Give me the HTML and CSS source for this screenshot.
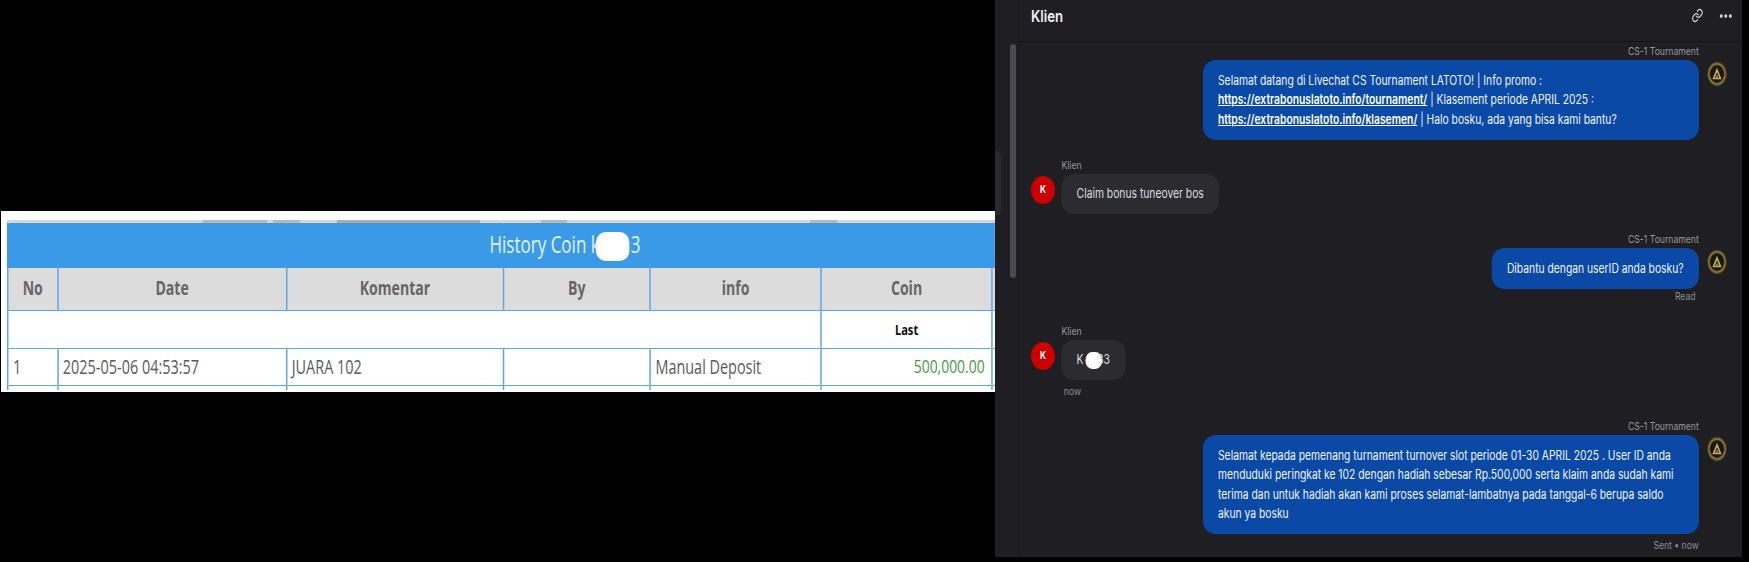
FILE: index.html
```html
<!DOCTYPE html>
<html lang="id">
<head>
<meta charset="utf-8">
<title>History Coin and Livechat</title>
<link rel="stylesheet" href="styles.css">
</head>
<body>
<main class="page">
  <section class="sheet">
    <div class="viewport">
      <div class="cut-row"></div>
      <div class="squish">
        <table class="coin-table">
          <colgroup>
            <col class="c-no"><col class="c-date"><col class="c-kom"><col class="c-by"><col class="c-info"><col class="c-coin"><col class="c-rest">
          </colgroup>
          <thead>
            <tr class="title-row"><th colspan="7">History Coin k<span class="blob-title"></span>3</th></tr>
            <tr class="head-row"><th>No</th><th>Date</th><th>Komentar</th><th>By</th><th>info</th><th>Coin</th><th></th></tr>
          </thead>
          <tbody>
            <tr class="last-row"><td colspan="5"></td><td class="last">Last</td><td></td></tr>
            <tr class="data-row"><td>1</td><td>2025-05-06 04:53:57</td><td>JUARA 102</td><td></td><td>Manual Deposit</td><td class="amount">500,000.00</td><td></td></tr>
            <tr class="data-row"><td>&nbsp;</td><td></td><td></td><td></td><td></td><td></td><td></td></tr>
          </tbody>
        </table>
      </div>
    </div>
  </section>

  <section class="panel">
    <aside class="strip">
      <div class="strip-item"></div>
      <div class="scrollbar"></div>
    </aside>
    <div class="chat-clip">
      <div class="chat">
        <header class="chat-head">
          <h1>Klien</h1>
          <div class="head-icons">
            <svg class="i-link" viewBox="0 0 24 24" fill="none" stroke="#d8d8dc" stroke-width="2" stroke-linecap="round" stroke-linejoin="round"><path d="M10 13a5 5 0 0 0 7.5.5l3-3a5 5 0 0 0-7-7l-1.7 1.7"/><path d="M14 11a5 5 0 0 0-7.5-.5l-3 3a5 5 0 0 0 7 7l1.7-1.7"/></svg>
            <svg class="i-dots" viewBox="0 0 24 8" fill="#d8d8dc"><circle cx="4" cy="4" r="2.6"/><circle cx="12" cy="4" r="2.6"/><circle cx="20" cy="4" r="2.6"/></svg>
          </div>
        </header>
        <div class="messages">
          <article class="msg out first">
            <div class="body">
              <div class="who">CS-1 Tournament</div>
              <div class="bubble blue wide">Selamat datang di Livechat CS Tournament LATOTO! | Info promo :<br><a>https://extrabonuslatoto.info/tournament/</a> | Klasement periode APRIL 2025 :<br><a>https://extrabonuslatoto.info/klasemen/</a> | Halo bosku, ada yang bisa kami bantu?</div>
            </div>
            <svg class="gold" viewBox="0 0 26 26"><use href="#logo"/></svg>
          </article>

          <article class="msg in">
            <div class="red">K</div>
            <div class="body">
              <div class="who">Klien</div>
              <div class="bubble grey">Claim bonus tuneover bos</div>
            </div>
          </article>

          <article class="msg out">
            <div class="body">
              <div class="who">CS-1 Tournament</div>
              <div class="bubble blue">Dibantu dengan userID anda bosku?</div>
              <div class="status read">Read</div>
            </div>
            <svg class="gold" viewBox="0 0 26 26"><use href="#logo"/></svg>
          </article>

          <article class="msg in after-read">
            <div class="red">K</div>
            <div class="body">
              <div class="who">Klien</div>
              <div class="bubble grey">K<span class="blob-chat"></span>33</div>
              <div class="status left">now</div>
            </div>
          </article>

          <article class="msg out after-now">
            <div class="body">
              <div class="who">CS-1 Tournament</div>
              <div class="bubble blue wide">Selamat kepada pemenang turnament turnover slot periode 01-30 APRIL 2025 . User ID anda<br>menduduki peringkat ke 102 dengan hadiah sebesar Rp.500,000 serta klaim anda sudah kami<br>terima dan untuk hadiah akan kami proses selamat-lambatnya pada tanggal-6 berupa saldo<br>akun ya bosku</div>
              <div class="status left">Sent • now</div>
            </div>
            <svg class="gold" viewBox="0 0 26 26"><use href="#logo"/></svg>
          </article>
        </div>
      </div>
    </div>
  </section>
</main>
<svg class="defs" aria-hidden="true">
  <defs>
    <radialGradient id="ring">
      <stop offset="0.6" stop-color="#1c1a10"/>
      <stop offset="0.8" stop-color="#8f7c38"/>
      <stop offset="1" stop-color="#2c2716"/>
    </radialGradient>
    <g id="logo">
      <circle cx="13" cy="13" r="13" fill="url(#ring)"/>
      <circle cx="13" cy="13" r="8.8" fill="#1a170d"/>
      <path d="M13 6.5 19 18.5H7Z" fill="#c4b066"/>
      <path d="M13 11 16 17h-6Z" fill="#2a2010"/>
      <rect x="11.5" y="14.5" width="3" height="2.5" fill="#b5762c"/>
    </g>
  </defs>
</svg>
</body>
</html>
```

FILE: styles.css
```css
* { box-sizing: border-box; }
html, body { margin: 0; height: 100%; background: #000; }
.page { display: flex; align-items: flex-start; width: 1749px; height: 562px; overflow: hidden; }
.defs { width: 0; height: 0; display: block; }

/* left: coin history sheet */
.sheet {
  flex: none;
  width: 994px;
  height: 181px;
  margin: 211px 0 0 1px;
  padding: 9px 0 2px 6px;
  background: #fff;
}
.viewport { height: 170px; overflow: hidden; }
.cut-row {
  height: 3px;
  background: linear-gradient(90deg, #d6d6d6 0 196px, #b8b8b8 196px 260px, #d6d6d6 260px 266px, #b8b8b8 266px 293px, #d6d6d6 293px 330px, #aaa 330px 473px, #d6d6d6 473px 534px, #b8b8b8 534px 560px, #d6d6d6 560px 803px, #b8b8b8 803px 830px, #d6d6d6 830px);
}
.squish { width: 135.135%; transform: scaleX(.74); transform-origin: 0 0; }
.coin-table {
  width: 100%;
  table-layout: fixed;
  border-collapse: collapse;
  font-family: "Open Sans", "Liberation Sans", sans-serif;
  color: #5d5d5d;
}
.c-no { width: 5.06%; }
.c-date { width: 23.18%; }
.c-kom { width: 21.96%; }
.c-by { width: 14.88%; }
.c-info { width: 17.31%; }
.c-coin { width: 17.31%; }
.c-rest { width: .3%; }
.coin-table th, .coin-table td {
  border: 2px solid #5ca6e6;
  border-width: 1px 2px;
  padding: 0 6px;
}
.coin-table tr > :last-child { border-right: 0; padding: 0; }
.title-row th {
  height: 44px;
  background: #3a9ae8;
  color: #e6f3ff;
  font-size: 23px;
  font-weight: 400;
  border-color: #3a9ae8;
}
.coin-table .title-row th { padding: 0 0 2px 171px; }
.blob-title {
  display: inline-block;
  width: 45px;
  height: 29px;
  margin: 0 2px 0 -5px;
  vertical-align: middle;
  border-radius: 13px / 10px;
  background: #fff;
}
.coin-table .head-row th {
  height: 43px;
  padding-bottom: 3px;
  background: #dcdcdc;
  font-size: 19px;
  font-weight: 700;
  color: #666;
}
.last-row td { height: 38px; }
.coin-table td.last { padding: 0 6px 1px; text-align: center; color: #111; font-weight: 700; font-size: 15px; }
.coin-table .data-row td { height: 37px; padding-bottom: 2px; font-size: 19.5px; color: #5a5a5a; }
.coin-table .data-row td.amount { padding-right: 9px; text-align: right; font-size: 18.8px; color: #3f9a3c; }

/* right: chat panel */
.panel {
  flex: none;
  display: flex;
  width: 747px;
  height: 557px;
  background: #1f1f23;
}
.strip {
  flex: none;
  width: 24px;
  height: 100%;
  display: flex;
  flex-direction: column;
  border-right: 1px solid #17171a;
  position: relative;
}
.strip-item {
  position: absolute;
  left: 0;
  top: 151px;
  width: 6px;
  height: 64px;
  border-radius: 0 4px 4px 0;
  background: #29292e;
}
.scrollbar {
  position: absolute;
  left: 15px;
  top: 44px;
  width: 6px;
  height: 234px;
  border-radius: 3px;
  background: #4a4a52;
}
.chat-clip { flex: none; width: 723px; overflow: hidden; }
.chat {
  width: 903.75px;
  height: 557px;
  transform: scaleX(.8);
  transform-origin: 0 0;
  font-family: Inter, "Liberation Sans", sans-serif;
  color: #e6e8ee;
}
.chat-head {
  display: flex;
  align-items: center;
  justify-content: space-between;
  height: 42px;
  padding: 0 12px 10px 15px;
  border-bottom: 1px solid #141416;
}
.chat-head h1 { margin: 0; font-size: 16.5px; font-weight: 600; color: #f0f0f2; }
.head-icons { display: flex; align-items: center; gap: 18px; }
.i-link { width: 18px; height: 15px; }
.i-dots { width: 17px; height: 6px; }

.messages { display: flex; flex-direction: column; padding: 3px 0 0 15px; }
.msg { display: flex; align-items: flex-start; margin-top: 19px; }
.msg.first { margin-top: 0; }
.msg.after-read { margin-top: 21px; }
.msg.after-now { margin-top: 21px; }
.msg.out { justify-content: flex-end; padding-right: 19px; }
.msg.out .body { display: flex; flex-direction: column; align-items: flex-end; }
.body { display: flex; flex-direction: column; align-items: flex-start; }
.who { height: 14px; margin-bottom: 1px; font-size: 10.8px; line-height: 14px; color: #96969e; }
.bubble {
  padding: 10.5px 19px;
  border-radius: 16px / 13px;
  font-size: 12.9px;
  line-height: 19.5px;
  white-space: nowrap;
}
.bubble a { color: #fff; font-weight: 600; text-decoration: underline; }
.blue { background: #0a4aa6; color: #f0f3fa; }
.grey { background: #2b2b30; color: #dcdce2; }
.wide { width: 620px; }
.status { margin-top: 5px; height: 14px; font-size: 10.8px; line-height: 14px; color: #8e8e96; }
.status.read { margin-top: 1px; padding-right: 4px; }
.status.left { padding-left: 3px; }
.gold { flex: none; width: 25px; height: 26px; margin: 16px 0 0 10px; }
.red {
  flex: none;
  display: flex;
  align-items: center;
  justify-content: center;
  width: 30px;
  height: 28px;
  margin: 17px 8px 0 0;
  border-radius: 50%;
  background: #cc0000;
  color: #fff;
  font-size: 10.5px;
  font-weight: 700;
}
.blob-chat {
  display: inline-block;
  width: 21px;
  height: 17px;
  margin: 0 -6px 0 2px;
  vertical-align: middle;
  border-radius: 9px;
  background: #fff;
}
```
